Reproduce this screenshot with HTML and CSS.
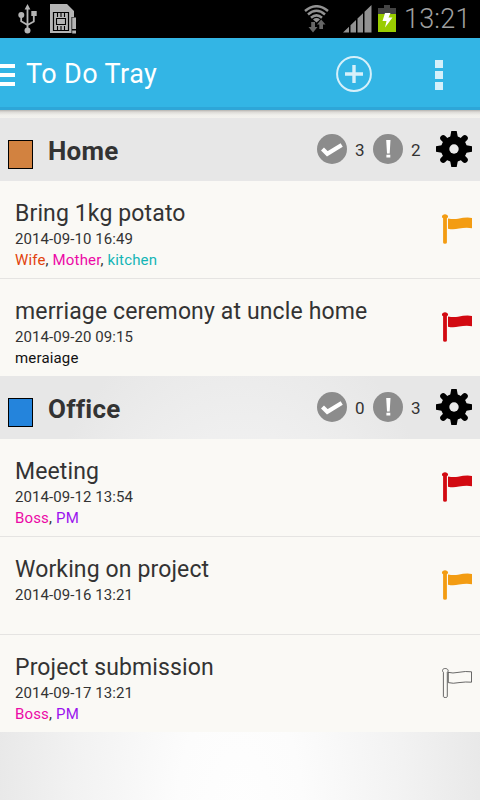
FILE: index.html
```html
<!DOCTYPE html>
<html lang="en">

<head>
    <meta charset="UTF-8">
    <meta name="viewport" content="width=device-width, initial-scale=1.0">
    <title>To Do Tray</title>
    <link rel="stylesheet" href="styles.css">
</head>

<body>
    <!-- shared icons -->
    <svg class="icon-defs" width="0" height="0">
        <symbol id="check" viewBox="0 0 30 30">
            <circle cx="15" cy="15" r="15" fill="#8c8c8c" />
            <path d="M5.5 15L10.3 19.8L24.7 11" fill="none" stroke="#fff" stroke-width="4.2" />
        </symbol>
        <symbol id="alert" viewBox="0 0 30 30">
            <circle cx="15" cy="15" r="15" fill="#8c8c8c" />
            <path d="M13.2 6H17.5L16.7 19.5H14Z M13.4 20.8H17.3V23.5H13.4Z" fill="#fff" />
        </symbol>
        <symbol id="gear" viewBox="0 0 36 36">
            <path d="M15.3 0H20.7L22 7H14Z M15.3 36H20.7L22 29H14Z M0 15.3V20.7L7 22V14Z M36 15.3V20.7L29 22V14Z" />
            <path d="M7.2 7.2L28.8 28.8M28.8 7.2L7.2 28.8" stroke="#000" stroke-width="6" stroke-linecap="round" />
            <circle cx="18" cy="18" r="13" />
            <circle cx="18" cy="18" r="4.7" fill="#e9e9e9" />
        </symbol>
        <symbol id="flag" viewBox="0 0 30 30">
            <path d="M1.1 4.3A2.9 2.2 0 1 1 4.9 4.3V28.5Q4.9 29.8 3 29.8Q1.1 29.8 1.1 28.5Z" />
            <path d="M6 4.4Q11 5.6 16 4.8Q24 2.9 30 3.9V14.2Q24 13.2 17 14.6Q11 15.9 6 14.7Z" />
        </symbol>
        <symbol id="flag-empty" viewBox="0 0 30 30">
            <g fill="none" stroke="#444" stroke-width="0.8">
                <path d="M1.4 4.3C-0.6 2.5 0.8 0.5 3.2 0.5S7.2 2.5 5.3 4.3V28.5Q5.3 29.5 3.3 29.5Q1.4 29.5 1.4 28.5Z" />
                <path d="M5.8 4.3Q11 5.6 16 4.4Q24 2.9 29.5 3.8V14.2Q24 13.6 17 14.6Q11 15.9 6.3 14.6V4.3" />
            </g>
        </symbol>
    </svg>

    <div class="status-bar">
        <svg class="usb" width="20" height="30" viewBox="0 0 20 30">
            <g fill="none" stroke="#b4b4b4" stroke-width="1.8">
                <path d="M9.5 4V27M3.2 12V17.2L9.5 21L15.8 17.5V11" />
            </g>
            <path d="M9.5 0L12.4 5.5H6.6Z M13.3 7H18.7V12H13.3Z" fill="#b4b4b4" />
            <circle cx="3.3" cy="11" r="3" fill="#b4b4b4" />
            <circle cx="9.5" cy="26.6" r="3" fill="#b4b4b4" />
        </svg>
        <svg class="sim" width="28" height="30" viewBox="0 0 28 30">
            <path d="M0 0H17L24 7V13H21.5V29H0Z" fill="#b4b4b4" />
            <path d="M3.5 8.5H18.5V26.5H3.5Z" fill="#b4b4b4" stroke="#000" stroke-width="1.2" />
            <path d="M7.5 9V13M11 9V13M14.5 9V13M7.5 22V26M11 22V26M14.5 22V26M6.5 14.5H15.5V20.5H6.5Z" fill="none" stroke="#000" stroke-width="1.1" />
            <path d="M22.2 13.5H26V25H22.2Z M22.2 26.5H26V29.5H22.2Z" fill="#b4b4b4" />
        </svg>
        <svg class="wifi" width="26" height="28" viewBox="0 0 26 28">
            <g fill="none" stroke="#929292" stroke-width="2.5">
                <path d="M1 6Q12.5 -3.5 24 6M4 9.5Q12.5 2 21 9.5M7 12.8Q12.5 8 18 12.8" />
            </g>
            <path d="M9 14.4Q12.5 11.5 16 14.4L12.5 17.5Z" fill="#929292" />
            <path d="M7.2 17H11V22H13.5L9 27.5L4.5 22H7.2Z M15.3 24H19V19.5H21.5L17.2 14.5L13 19.5H15.3Z" fill="#666" />
        </svg>
        <svg class="signal" width="29" height="28" viewBox="0 0 29 28">
            <path d="M0 27.5L6 21.7V27.5Z M7.5 20.3L13 15V27.5H7.5Z M14.5 13.5L20 8.2V27.5H14.5Z M21.5 6.7L28.5 0V27.5H21.5Z" fill="#929292" />
        </svg>
        <svg class="battery" width="18" height="27" viewBox="0 0 18 27">
            <path d="M6 0H12V3H18V9H0V3H6Z" fill="#444" />
            <path d="M0 9H18V27H0Z" fill="#99cc00" />
            <path d="M7 8H12.5L10.5 12.5H14.5L7 22.5L8.5 16H4.5Z" fill="#fff" />
        </svg>
        <span class="clock">13:21</span>
    </div>

    <div class="action-bar">
        <div class="menu-lines"></div>
        <h1>To Do Tray</h1>
        <svg class="add" width="36" height="36" viewBox="0 0 36 36">
            <circle cx="18" cy="18" r="16.9" />
            <path d="M18 9V27M9 18H27" />
        </svg>
        <div class="overflow">
            <span></span>
            <span></span>
            <span></span>
        </div>
    </div>
    <div class="shadow"></div>

    <div class="group">
        <div class="color-box home"></div>
        <h2>Home</h2>
        <svg class="badge"><use href="#check" /></svg>
        <span class="count">3</span>
        <svg class="badge"><use href="#alert" /></svg>
        <span class="count">2</span>
        <svg class="gear"><use href="#gear" /></svg>
    </div>
    <div class="task">
        <div class="info">
            <div class="title">Bring 1kg potato</div>
            <div class="date">2014-09-10 16:49</div>
            <div class="tags"><span class="wife">Wife</span>, <span class="pink">Mother</span>, <span class="teal">kitchen</span></div>
        </div>
        <svg class="flag orange"><use href="#flag" /></svg>
    </div>
    <div class="task">
        <div class="info">
            <div class="title">merriage ceremony at uncle home</div>
            <div class="date">2014-09-20 09:15</div>
            <div class="tags"><span class="black">meraiage</span></div>
        </div>
        <svg class="flag red"><use href="#flag" /></svg>
    </div>

    <div class="group">
        <div class="color-box office"></div>
        <h2>Office</h2>
        <svg class="badge"><use href="#check" /></svg>
        <span class="count">0</span>
        <svg class="badge"><use href="#alert" /></svg>
        <span class="count">3</span>
        <svg class="gear"><use href="#gear" /></svg>
    </div>
    <div class="task">
        <div class="info">
            <div class="title">Meeting</div>
            <div class="date">2014-09-12 13:54</div>
            <div class="tags"><span class="pink">Boss</span>, <span class="purple">PM</span></div>
        </div>
        <svg class="flag red"><use href="#flag" /></svg>
    </div>
    <div class="task">
        <div class="info">
            <div class="title">Working on project</div>
            <div class="date">2014-09-16 13:21</div>
        </div>
        <svg class="flag orange"><use href="#flag" /></svg>
    </div>
    <div class="task">
        <div class="info">
            <div class="title">Project submission</div>
            <div class="date">2014-09-17 13:21</div>
            <div class="tags"><span class="pink">Boss</span>, <span class="purple">PM</span></div>
        </div>
        <svg class="flag"><use href="#flag-empty" /></svg>
    </div>
</body>

</html>
```
FILE: styles.css
```css
* {
    box-sizing: border-box;
}

body {
    font-family: Roboto, sans-serif;
    margin: 0;
    height: 800px;
    overflow: hidden;
    color: #333;
    background: radial-gradient(ellipse 255px 520px at 240px 820px, #fefefe 0%, #fcfcfc 25%, #f2f2f2 65%, #e7e7e7 100%);
}

h1, h2 {
    margin: 0;
}

svg {
    display: block;
    flex: none;
}

.icon-defs {
    position: absolute;
}

.status-bar {
    display: flex;
    align-items: flex-start;
    height: 38px;
    padding: 5px 10px 0 18px;
    background: #000;
}

.usb {
    margin-top: -1px;
}

.sim {
    margin: -1px 0 0 12px;
}

.wifi {
    margin-left: 226px;
}

.signal {
    margin-left: 13px;
}

.battery {
    margin-left: 6px;
}

.clock {
    margin-left: 8px;
    font-size: 27px;
    font-weight: 300;
    line-height: 28px;
    letter-spacing: 0.2px;
    color: #a0a0a0;
    white-space: nowrap;
}

.action-bar {
    display: flex;
    align-items: center;
    height: 72px;
    padding-right: 37px;
    background: #33b5e5;
    border-bottom: 3px solid #2ea6d8;
}

.menu-lines {
    width: 15px;
    height: 22px;
    margin-top: 4px;
    background: linear-gradient(#fff 4px, transparent 4px 9px, #fff 9px 13px, transparent 13px 18px, #fff 18px);
}

.action-bar h1 {
    flex: 1;
    padding: 3px 0 0 11px;
    font-size: 27px;
    font-weight: 400;
    line-height: 30px;
    letter-spacing: 0.4px;
    color: #fff;
}

.add {
    margin: 3px 63px 0 0;
    fill: none;
    stroke: #d6f0fa;
    stroke-width: 2;
}

.add path {
    stroke-width: 3.4;
}

.overflow {
    display: flex;
    flex-direction: column;
    gap: 3px;
    margin-top: 5px;
}

.overflow span {
    width: 8px;
    height: 8px;
    background: #d6f0fa;
}

.shadow {
    height: 8px;
    background: linear-gradient(#b5b2ae, #dcdad6 2px, #f0efeb 5px, #f3f2ee);
}

.group {
    display: flex;
    align-items: center;
    height: 63px;
    padding: 0 8px;
}

.color-box {
    width: 25px;
    height: 29px;
    margin-top: 10px;
    border: 1px solid #000;
}

.home {
    background: #d28240;
}

.office {
    background: #2484dc;
}

.group h2 {
    flex: 1;
    padding: 3px 0 0 15px;
    font-size: 26px;
    font-weight: 700;
    line-height: 30px;
    letter-spacing: 0.25px;
}

.badge {
    width: 30px;
    height: 30px;
    margin-bottom: 2px;
}

.count {
    width: 26px;
    padding: 1px 0 0 8px;
    font-size: 17px;
    line-height: 20px;
}

.gear {
    width: 36px;
    height: 36px;
    margin: 0 0 2px 7px;
}

.task {
    display: flex;
    height: 97px;
    padding: 0 8px 0 15px;
    background: #faf9f5;
}

.task + .task {
    height: 98px;
    border-top: 1px solid #e5e4e2;
}

.info {
    flex: 1;
    padding-top: 19px;
    white-space: nowrap;
}

.title {
    font-size: 23px;
    line-height: 28px;
    letter-spacing: 0.13px;
}

.date {
    font-size: 15px;
    line-height: 22px;
    letter-spacing: 0.08px;
}

.tags {
    font-size: 15px;
    line-height: 20px;
    letter-spacing: 0.16px;
}

.flag {
    width: 30px;
    height: 30px;
    margin-top: 33px;
}

.orange {
    fill: #f39c12;
}

.red {
    fill: #d20a11;
}

.wife {
    color: #e2430c;
}

.pink {
    color: #ec0aa6;
}

.teal {
    color: #13b5b5;
}

.purple {
    color: #9a14ee;
}

.black {
    color: #111;
}
```
